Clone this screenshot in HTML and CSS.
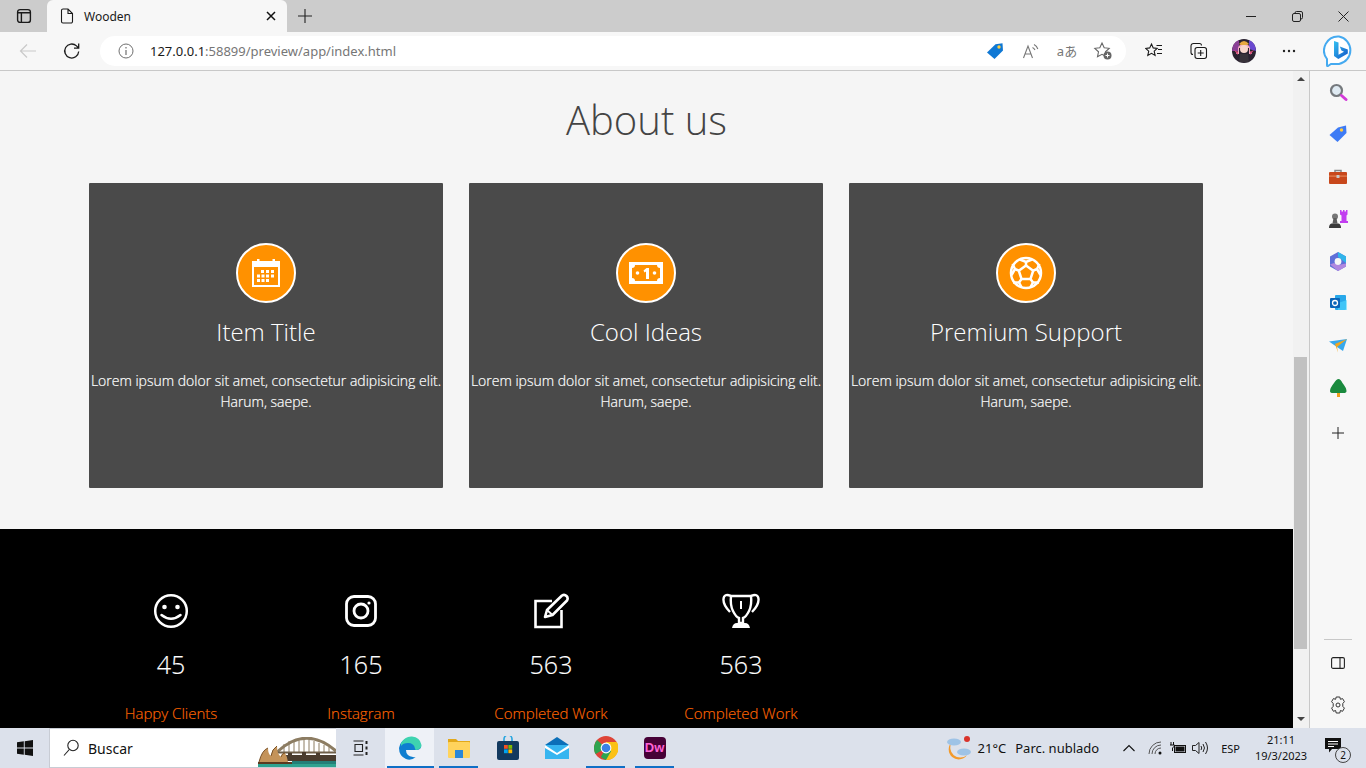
FILE: index.html
```html
<!DOCTYPE html>
<html lang="es">
<head>
<meta charset="utf-8">
<title>Wooden</title>
<link rel="stylesheet" href="styles.css">
</head>
<body>
<div class="window">
  <header class="tabbar">
    <div class="tab-actions">
      <svg width="16" height="16" viewBox="0 0 16 16" fill="none" stroke="#1a1a1a" stroke-width="1.400"><rect x="1.600" y="1.600" width="12.800" height="12.800" rx="2.500"/><path d="M1.600 4.800h12.800M5.400 4.800v9.600" /></svg>
    </div>
    <div class="tab">
      <svg width="14" height="16" viewBox="0 0 14 16" fill="none" stroke="#1a1a1a" stroke-width="1.100"><path d="M1.500 2.500a1.500 1.500 0 0 1 1.500-1.500h5l4.500 4.500V13.500a1.500 1.500 0 0 1-1.500 1.500H3a1.500 1.500 0 0 1-1.500-1.500zM8 1v4.500h4.500"/></svg>
      <span class="tab-title">Wooden</span>
      <svg class="tab-close" width="10" height="10" viewBox="0 0 10 10" stroke="#111" stroke-width="1.500"><path d="M1 1l8 8M9 1l-8 8"/></svg>
    </div>
    <div class="new-tab">
      <svg width="16" height="16" viewBox="0 0 16 16" stroke="#222" stroke-width="1.100"><path d="M8 1v14M1 8h14"/></svg>
    </div>
    <div class="win-controls">
      <div class="win-btn"><svg width="10" height="10" viewBox="0 0 10 10" stroke="#222"><path d="M0 5.500h10"/></svg></div>
      <div class="win-btn"><svg width="11" height="11" viewBox="0 0 11 11" fill="none" stroke="#222"><rect x=".5" y="2.500" width="8" height="8" rx="1.500"/><path d="M3 2.500V2A1.500 1.500 0 0 1 4.500.5H9A1.500 1.500 0 0 1 10.500 2v4.500A1.500 1.500 0 0 1 9 8h-.5"/></svg></div>
      <div class="win-btn"><svg width="11" height="11" viewBox="0 0 11 11" stroke="#222"><path d="M.5.5l10 10M10.500.5l-10 10"/></svg></div>
    </div>
  </header>

  <nav class="toolbar">
    <div class="tool-btn">
      <svg width="18" height="16" viewBox="0 0 18 16" fill="none" stroke="#c9c9c9" stroke-width="1.200"><path d="M17 8H1.500M8 1.500L1.500 8 8 14.500"/></svg>
    </div>
    <div class="tool-btn">
      <svg width="18" height="18" viewBox="0 0 18 18" fill="none" stroke="#1c1c1c" stroke-width="1.300"><path d="M15.700 9.500a7 7 0 1 1-2.200-5.600L15.500 6M15.700 1.500V6.200H11"/></svg>
    </div>
    <div class="address">
      <svg width="16" height="16" viewBox="0 0 16 16" fill="none" stroke="#707070"><circle cx="8" cy="8" r="7"/><path d="M8 7v5M8 4v1.500" stroke-width="1.200"/></svg>
      <div class="url"><span class="url-host">127.0.0.1</span>:58899/preview/app/index.html</div>
      <div class="addr-icons">
        <div class="addr-btn"><svg width="18" height="18" viewBox="0 0 18 18"><path d="M1 10.500L9.500 2.200 16.500 1.200 17 8.500 8.500 17z" fill="#0f78d4"/><circle cx="13" cy="5" r="1.700" fill="#ffcf3f"/></svg></div>
        <div class="addr-btn"><svg width="18" height="18" viewBox="0 0 18 18" fill="none" stroke="#777" stroke-width="1.100"><path d="M1.500 16L6 4 10.500 16M3 12h6M10.500 5.500a5 5 0 0 1 2.500 2.500M12 2.500a7 7 0 0 1 3.800 4.500"/></svg></div>
        <div class="addr-text">aあ</div>
        <div class="addr-btn"><svg width="20" height="20" viewBox="0 0 20 20"><path d="M9 2l2.200 4.700 5 .6-3.700 3.500 1 5-4.500-2.500L4.500 15.800l1-5L1.800 7.300l5-.6z" fill="none" stroke="#666" stroke-width="1.100"/><circle cx="14.500" cy="14.500" r="4" fill="#666"/><path d="M14.500 12.500v4M12.500 14.500h4" stroke="#fff"/></svg></div>
      </div>
    </div>
    <div class="tool-icons">
      <div class="tool-btn-s"><svg width="18" height="18" viewBox="0 0 18 18" fill="none" stroke="#1a1a1a" stroke-width="1.100"><path d="M6.500 2l1.700 3.900 4 .5-3 2.800.9 4.200-3.600-2.100-3.700 2.100.9-4.200-3-2.800 4-.5zM11.500 3.500H17M13 7.500h4M12 11.500h5"/></svg></div>
      <div class="tool-btn-s"><svg width="18" height="18" viewBox="0 0 18 18" fill="none" stroke="#1a1a1a" stroke-width="1.100"><path d="M3 12.500A2 2 0 0 1 1 10.500V4A2.500 2.500 0 0 1 3.500 1.500H9.500A2 2 0 0 1 11.500 3.500"/><rect x="5" y="5.500" width="11.500" height="11" rx="2.200"/><path d="M10.700 8v6M7.700 11h6"/></svg></div>
      <div class="tool-btn-s">
        <svg width="24" height="24" viewBox="0 0 24 24"><circle cx="12" cy="12" r="12" fill="#2a2230"/><path d="M0 12A12 12 0 0 1 7 1L7 12z" fill="#8a3f95"/><path d="M24 12A12 12 0 0 0 17 1L17 10z" fill="#6a48d0"/><path d="M6 12q-1-7 6-7t6 7l2 3h-3V9H7v6H4z" fill="#f3a8c0"/><circle cx="12" cy="10" r="4" fill="#f8d6cc"/><path d="M7 5q5-6 10 0l-2 1H9z" fill="#e8a840"/><path d="M2 11l4 2v3zM22 11l-4 2v3z" fill="#e14d7a"/><path d="M8 15h8l1 8H7z" fill="#38323a"/></svg>
      </div>
      <div class="tool-btn-s"><svg width="14" height="4" viewBox="0 0 14 4" fill="#222"><circle cx="2" cy="2" r="1.200"/><circle cx="7" cy="2" r="1.200"/><circle cx="12" cy="2" r="1.200"/></svg></div>
    </div>
    <div class="bing">
      <svg width="32" height="32" viewBox="0 0 32 32"><defs><linearGradient id="bingb" x1="0" y1="0" x2="1" y2="1"><stop offset="0" stop-color="#35c1f1"/><stop offset="1" stop-color="#1156c8"/></linearGradient></defs><path d="M16 1.500a14 14 0 0 1 0 27.500H8l-3 2q-1 .5-1-1V24A14 14 0 0 1 16 1.500z" fill="#fff" stroke="#45aaf0" stroke-width="2"/><path d="M11 6l4.500 1.600v12.200l5.500-3-2.600-1.200-1.600-4 8 2.800v4l-9.500 5.500L11 21z" fill="url(#bingb)"/></svg>
    </div>
  </nav>

  <div class="body-row">
    <main class="page">
      <section class="about">
        <h1 class="about-title">About us</h1>
        <div class="cards">
          <article class="card">
            <div class="card-icon">
              <svg width="28" height="28" viewBox="0 0 28 28" fill="#fff"><path fill-rule="evenodd" d="M0 2h5V0h2.500v2h13V0H23v2h5v26H0zM2 8v18h24V8z"/><path d="M9 11h3v3H9zM14 11h3v3h-3zM19 11h3v3h-3zM5 15.500h3v3H5zM9.500 15.500h3v3h-3zM14 15.500h3v3h-3zM19 15.500h3v3h-3zM5 20h3v3H5zM9.500 20h3v3h-3zM14 20h3v3h-3z"/></svg>
            </div>
            <h2 class="card-title">Item Title</h2>
            <p class="card-text">Lorem ipsum dolor sit amet, consectetur adipisicing elit. Harum, saepe.</p>
          </article>
          <article class="card">
            <div class="card-icon">
              <svg width="34" height="22" viewBox="0 0 34 22"><path fill="#fff" fill-rule="evenodd" d="M0 0h34v22H0zM6 3a3 3 0 0 1-3 3v10a3 3 0 0 1 3 3h22a3 3 0 0 1 3-3V6a3 3 0 0 1-3-3z"/><circle cx="8.500" cy="11" r="1.800" fill="#fff"/><circle cx="25.500" cy="11" r="1.800" fill="#fff"/><path d="M14.500 8.500l3-2.500h2.500v11h-3V9.500l-1.500 1z" fill="#fff"/></svg>
            </div>
            <h2 class="card-title">Cool Ideas</h2>
            <p class="card-text">Lorem ipsum dolor sit amet, consectetur adipisicing elit. Harum, saepe.</p>
          </article>
          <article class="card">
            <div class="card-icon">
              <svg width="34" height="34" viewBox="0 0 34 34" fill="none" stroke="#fff" stroke-width="2.500"><circle cx="17" cy="17" r="15"/><path d="M17 9.500l7.200 5.200-2.700 8.300h-9l-2.700-8.300z"/><path d="M17 9.500V6M24.200 14.700L28 13M21.500 23l2.500 3.500M12.500 23L10 26.500M9.800 14.700L6 13"/><path d="M11 3.500l6 2.500 6-2.500M28 13l2.500-5M28 13l3.500 6M24 26.500h6M24 26.500l-2.500 4.500M10 26.500H4M10 26.500l2.500 4.500M6 13L3.500 8M6 13l-3.500 6"/></svg>
            </div>
            <h2 class="card-title">Premium Support</h2>
            <p class="card-text">Lorem ipsum dolor sit amet, consectetur adipisicing elit. Harum, saepe.</p>
          </article>
        </div>
      </section>
      <section class="stats">
        <div class="stat">
          <svg width="36" height="36" viewBox="0 0 36 36" fill="none" stroke="#fff" stroke-width="2.500"><circle cx="18" cy="18" r="15.800"/><circle cx="11.500" cy="14" r="2.300" fill="#fff" stroke="none"/><circle cx="24.500" cy="14" r="2.300" fill="#fff" stroke="none"/><path d="M8.500 22q9.500 7.500 19 0" stroke-linecap="round"/></svg>
          <div class="stat-num">45</div>
          <div class="stat-label">Happy Clients</div>
        </div>
        <div class="stat">
          <svg width="36" height="36" viewBox="0 0 36 36" fill="none" stroke="#fff" stroke-width="2.800"><rect x="3.500" y="3.500" width="29" height="29" rx="7.500"/><circle cx="18" cy="18" r="7"/><circle cx="26" cy="10" r="1.600" fill="#fff" stroke="none"/></svg>
          <div class="stat-num">165</div>
          <div class="stat-label">Instagram</div>
        </div>
        <div class="stat">
          <svg width="36" height="36" viewBox="0 0 36 36" fill="none" stroke="#fff" stroke-width="2.600"><path d="M19 8H2.500v26h26V17"/><path d="M12 24l2-7L29 2.500q2.500-1.500 4.500.5t.5 4.500L19.500 22z" stroke-linejoin="round"/><path d="M14 17l5.500 5" stroke-width="1.800"/></svg>
          <div class="stat-num">563</div>
          <div class="stat-label">Completed Work</div>
        </div>
        <div class="stat">
          <svg width="38" height="36" viewBox="0 0 38 36" fill="none" stroke="#fff" stroke-width="2.400"><path d="M9 3h20q1 9-2 15-3 6-6 7v5h-4v-5q-3-1-6-7-3-6-2-15z"/><path d="M9 3Q2 0 1.500 6 1 12 8 19M29 3q7-3 7.500 3 .5 6-6.500 13"/><path d="M10 35q1-5 5-5h8q4 0 5 5z" fill="#fff" stroke="none"/><path d="M19 8v8" stroke-width="2"/></svg>
          <div class="stat-num">563</div>
          <div class="stat-label">Completed Work</div>
        </div>
      </section>
    </main>

    <div class="scrollbar">
      <div class="arrow-up"></div>
      <div class="thumb"></div>
      <div class="arrow-down"></div>
    </div>

    <aside class="sidebar">
      <div class="side-btn"><svg width="19" height="19" viewBox="0 0 19 19"><circle cx="7.500" cy="7.500" r="5.500" fill="#dfeaf2" stroke="#75797d" stroke-width="2.200"/><path d="M12.500 12.500l4.500 4" stroke="#d23ad8" stroke-width="3" stroke-linecap="round"/></svg></div>
      <div class="side-btn"><svg width="18" height="18" viewBox="0 0 18 18"><path d="M.5 10L9 2.500 17 .5 17.500 8 8.500 17z" fill="#3e7bf5"/><circle cx="12.500" cy="5" r="1.700" fill="#ffc93c"/></svg></div>
      <div class="side-btn"><svg width="18" height="16" viewBox="0 0 18 16"><path d="M6 3V1.500h6V3" fill="none" stroke="#888" stroke-width="1.500"/><rect y="3" width="18" height="12" rx="1" fill="#c8481c"/><rect y="6.500" width="18" height="1.200" fill="#e68454"/><rect x="7.500" y="6" width="3" height="3" rx=".5" fill="#c9c9c9"/></svg></div>
      <div class="side-btn"><svg width="19" height="19" viewBox="0 0 19 19"><path d="M11 1h1.500v1.500h1.500V1h1.500v1.500H17V1h1.500v4.500l-1 1V12H19v2h-8v-2h1.500V6.500l-1.500-1z" fill="#c23ef0"/><circle cx="6" cy="7.500" r="3" fill="#777"/><path d="M4.500 9h3l1 5.500h-5z" fill="#5c5c5c"/><path d="M0 19q0-4 2.500-4.500h7Q12 15 12 19z" fill="#3a3a3a"/></svg></div>
      <div class="side-btn"><svg width="18" height="19" viewBox="0 0 18 19"><path d="M9 0l8 4.500v10L9 19l-8-4.500v-10z" fill="#5f6fd8"/><path d="M9 0l8 4.500V11l-4-3-4-3z" fill="#30b4ea"/><path d="M1 12.500l4-1.500 4 2 8-1.500v3L9 19z" fill="#b088e0"/><circle cx="9" cy="9.500" r="3.400" fill="#f7f7f7"/></svg></div>
      <div class="side-btn"><svg width="17" height="16" viewBox="0 0 17 16"><rect x="5" y="0" width="11" height="15" rx="1" fill="#28a8ea"/><path d="M8 8l9-3v10H8z" fill="#50d9ff" opacity=".6"/><rect y="3" width="10" height="10" rx="1" fill="#0a64b8"/><circle cx="5" cy="8" r="2.500" fill="none" stroke="#fff" stroke-width="1.300"/></svg></div>
      <div class="side-btn"><svg width="18" height="14" viewBox="0 0 18 14"><path d="M0 2.500L18 0 14 12 8 8z" fill="#38a8ec"/><path d="M6 5l12-5-10 8 1 5.500z" fill="#f4a71d"/></svg></div>
      <div class="side-btn"><svg width="17" height="18" viewBox="0 0 17 18"><path d="M8.500 0q2 0 4 4 4 5 4 8 0 2-3 2H3q-3 0-3-2 0-3 4-8 2.500-4 4.500-4z" fill="#1a8a3e"/><path d="M7 14h3v4H7z" fill="#eda01f"/></svg></div>
      <div class="side-btn side-plus"><svg width="12" height="12" viewBox="0 0 12 12" stroke="#222"><path d="M6 0v12M0 6h12"/></svg></div>
      <div class="side-bottom">
        <div class="side-rule"></div>
        <div class="side-btn"><svg width="14" height="12" viewBox="0 0 14 12" fill="none" stroke="#222" stroke-width="1.100"><rect x=".6" y=".6" width="12.800" height="10.800" rx="1.500"/><path d="M9 .6v10.800"/></svg></div>
        <div class="side-btn"><svg width="16" height="18" viewBox="0 0 16 18" fill="none" stroke="#333" stroke-width="1"><path d="M6.200 1h3.600l.6 2.300 2.200-.7 1.800 3.100-1.600 1.800v2.900l1.600 1.700-1.800 3.200-2.200-.8L9.800 17H6.200l-.6-2.500-2.200.8-1.800-3.200L3.200 10.400V7.500L1.600 5.700l1.800-3.100 2.200.7z"/><circle cx="8" cy="9" r="2"/></svg></div>
      </div>
    </aside>
  </div>

  <footer class="taskbar">
    <div class="start">
      <svg width="16" height="16" viewBox="0 0 16 16" fill="#111"><path d="M0 2.300L6.800 1.300V7.500H0zM7.700 1.200L16 0V7.500H7.700zM0 8.500H6.800V14.700L0 13.700zM7.700 8.500H16V16L7.700 14.800z"/></svg>
    </div>
    <div class="search">
      <svg width="16" height="18" viewBox="0 0 16 18" fill="none" stroke="#222" stroke-width="1.100"><circle cx="10" cy="6.500" r="5.200"/><path d="M6.300 10.500L1 16.500"/></svg>
      <span class="search-text">Buscar</span>
      <svg class="search-art" width="78" height="30" viewBox="0 0 78 30"><path d="M19 15Q48-12 78 14" fill="none" stroke="#8c7c62" stroke-width="3"/><path d="M26 15V7M31 15V4M36 15V3M41 15V2M46 15V2M51 15V3M56 15V4M61 15V6M66 15V8M71 15V10" stroke="#8c7c62"/><path d="M19 15.500h59" stroke="#6e5f4a" stroke-width="2"/><path d="M26 24v-6h4v-2h4v2h10v-3h4v3h10v-2h4v2h16v6z" fill="#4a3c2f"/><path d="M1 25q3-12 9-14 0 6 3 8 1-7 6-10 0 8 4 11 1-4 4-4 2 3 3 9z" fill="#c4935a"/><path d="M1 25q3-12 9-14M13 19q1-7 6-10M23 20q1-4 4-4" fill="none" stroke="#7a5228"/><path d="M0 25h34v2H0z" fill="#5b3a20"/><path d="M0 27h78v3H0z" fill="#2fa390"/><path d="M34 24h44v3H34z" fill="#247f78"/></svg>
    </div>
    <div class="task-view">
      <svg width="16" height="16" viewBox="0 0 16 16" fill="none" stroke="#222" stroke-width="1.100"><path d="M.5 1h10M.5 15h10M2 4.500h7.500v7H2z"/><path d="M13.500 1v3M13.500 6.500v3M13.500 12v3" stroke-width="2"/></svg>
    </div>
    <div class="task-apps">
      <div class="task-app task-app-active"><svg width="24" height="24" viewBox="0 0 24 24"><path d="M1 12A11.500 11.500 0 0 1 23 9q1 5-5 5H8q0 6 7 7 2 .5 3 0-5 4-10 2Q1 20 1 12z" fill="#0f7ed0"/><path d="M3 7Q7 0 14 .5 22 1 23.500 9q0 4-5 5-1.500 0-1.500-1.500Q16 7 10 7 5 7 3 10z" fill="#3ed3b0"/></svg></div>
      <div class="task-app task-app-open"><svg width="22" height="20" viewBox="0 0 22 20"><path d="M0 1h8l2 2h12v3H0z" fill="#e2a81a"/><rect y="4" width="22" height="16" rx="1" fill="#ffd35c"/><rect x="7" y="12" width="8" height="8" fill="#2b87d8"/></svg></div>
      <div class="task-app"><svg width="22" height="24" viewBox="0 0 22 24"><path d="M7 5V3a4 4 0 0 1 8 0v2" fill="none" stroke="#29a6e0" stroke-width="1.600"/><rect y="5" width="22" height="19" rx="2" fill="#12395f"/><rect x="7" y="9" width="3.800" height="3.800" fill="#f25022"/><rect x="11.400" y="9" width="3.800" height="3.800" fill="#7fba00"/><rect x="7" y="13.400" width="3.800" height="3.800" fill="#00a4ef"/><rect x="11.400" y="13.400" width="3.800" height="3.800" fill="#ffb900"/></svg></div>
      <div class="task-app"><svg width="24" height="22" viewBox="0 0 24 22"><path d="M0 8L12 0l12 8z" fill="#0b6fb8"/><rect y="8" width="24" height="14" fill="#36b5f0"/><path d="M0 8l12 8 12-8v3L12 18 0 11z" fill="#fff"/></svg></div>
      <div class="task-app task-app-open"><svg width="24" height="24" viewBox="0 0 24 24"><circle cx="12" cy="12" r="12" fill="#de4437"/><path d="M12 12L1.600 18A12 12 0 0 1 3 4z" fill="#2ea44f"/><path d="M12 6h10.800A12 12 0 0 1 12 24z" fill="#fbc116"/><path d="M12 12l-5.200 9A12 12 0 0 0 12 24l5.200-9z" fill="#2ea44f"/><circle cx="12" cy="12" r="5.400" fill="#fff"/><circle cx="12" cy="12" r="4.300" fill="#3b82e6"/></svg></div>
      <div class="task-app task-app-open"><div class="dw-logo">Dw</div></div>
    </div>
    <div class="tray">
      <svg class="weather" width="26" height="26" viewBox="0 0 26 26"><path d="M6 7a10 10 0 1 0 15 13A10 10 0 0 1 6 7z" fill="#f39a2b"/><circle cx="21" cy="4" r="3" fill="#d9332b"/><ellipse cx="8" cy="7" rx="7" ry="3.500" fill="#9ec3e6"/><ellipse cx="18" cy="17" rx="7" ry="3.500" fill="#9ec3e6"/></svg>
      <span class="temp">21°C</span>
      <span class="weather-text">Parc. nublado</span>
      <svg class="tray-chevron" width="12" height="8" viewBox="0 0 12 8" fill="none" stroke="#111" stroke-width="1.100"><path d="M.5 7L6 1.500 11.500 7"/></svg>
      <svg class="tray-wifi" width="14" height="14" viewBox="0 0 14 14" fill="none" stroke="#222"><path d="M1 13a12 12 0 0 1 12-12M4 13a9 9 0 0 1 9-9M7 13a6 6 0 0 1 6-6" stroke="#555"/><circle cx="12" cy="12" r="1.500" fill="#111" stroke="none"/></svg>
      <svg class="tray-batt" width="16" height="12" viewBox="0 0 16 12" fill="none" stroke="#111"><rect x="4.500" y="3.500" width="11" height="7"/><rect x="6" y="5" width="8" height="4" fill="#111"/><path d="M1 0v3M3.500 0v3M0 3h4.500v1L2.500 6v3" /></svg>
      <svg class="tray-vol" width="16" height="14" viewBox="0 0 16 14" fill="none" stroke="#222"><path d="M.5 4.500h3L7 1.500v11L3.500 9.500h-3zM9 5q1.500 2 0 4M11 3q3 4 0 8M13.500 1q4 6 0 12"/></svg>
      <span class="lang">ESP</span>
      <div class="clock"><span>21:11</span><span>19/3/2023</span></div>
      <div class="notif">
        <svg width="16" height="15" viewBox="0 0 16 15"><path d="M0 0h16v11H7l-3 3.500V11H0z" fill="#111"/><path d="M3 3.500h10M3 6h10M3 8.500h6" stroke="#fff"/></svg>
        <span class="notif-badge">2</span>
      </div>
    </div>
  </footer>
</div>
</body>
</html>
```
FILE: styles.css
```css
* { box-sizing: border-box; }
html, body { margin: 0; padding: 0; height: 100%; overflow: hidden; }
body { font-family: "Noto Sans", "Open Sans", sans-serif; color: #222; }
svg { display: block; flex: none; }

.window { width: 1366px; height: 768px; display: flex; flex-direction: column; overflow: hidden; background: #f7f7f7; }

/* Tab strip */
.tabbar { height: 32px; flex: none; background: #cccccc; display: flex; align-items: flex-end; }
.tab-actions { width: 47px; height: 32px; display: flex; align-items: center; justify-content: center; }
.tab { width: 240px; height: 32px; background: #f7f7f7; border-radius: 6px 6px 0 0; display: flex; align-items: center; padding: 0 11px 0 13px; }
.tab-title { font-size: 12px; margin-left: 10px; color: #1a1a1a; }
.tab-close { margin-left: auto; }
.new-tab { width: 36px; height: 32px; display: flex; align-items: center; justify-content: center; }
.win-controls { margin-left: auto; display: flex; height: 32px; }
.win-btn { width: 46px; display: flex; align-items: center; justify-content: center; }

/* Toolbar */
.toolbar { height: 39px; flex: none; background: #f7f7f7; border-bottom: 1px solid #c8c8c8; display: flex; align-items: center; padding: 0 4px 1px 6px; }
.tool-btn { width: 44px; height: 30px; display: flex; align-items: center; justify-content: center; }
.address { width: 1026px; height: 30px; margin-left: 6px; background: #fff; border-radius: 15px; display: flex; align-items: center; padding: 0 5px 0 18px; }
.url { font-size: 13px; color: #767676; margin-left: 16px; white-space: nowrap; }
.url-host { color: #1a1a1a; }
.addr-icons { margin-left: auto; display: flex; align-items: center; }
.addr-btn { width: 36px; height: 30px; display: flex; align-items: center; justify-content: center; }
.addr-text { width: 36px; font-size: 13px; color: #777; text-align: center; font-family: "Noto Sans", "Noto Sans CJK JP", sans-serif; }
.tool-icons { display: flex; margin-left: 5px; }
.tool-btn-s { width: 45px; height: 30px; display: flex; align-items: center; justify-content: center; }
.bing { margin-left: 5px; width: 46px; display: flex; justify-content: center; }

/* Main row */
.body-row { flex: 1; min-height: 0; display: flex; }
.page { width: 1293px; flex: none; overflow: hidden; font-family: "Open Sans", sans-serif; }

.about { height: 458px; background: #f5f5f5; padding-top: 22px; }
.about-title { margin: 0; height: 54px; line-height: 54px; font-size: 40px; font-weight: 300; color: #444; text-align: center; }
.cards { margin-top: 36px; padding-left: 89px; display: flex; gap: 26px; }
.card { width: 354px; height: 305px; background: #4a4a4a; border-radius: 1px; padding-top: 60px; display: flex; flex-direction: column; align-items: center; color: #fff; }
.card-icon { width: 60px; height: 60px; border-radius: 50%; border: 2px solid #fff; background: #ff9100; display: flex; align-items: center; justify-content: center; }
.card-title { margin: 12px 0 0; font-size: 24px; line-height: 33px; font-weight: 300; }
.card-text { margin: 22px 0 0; font-size: 14px; line-height: 21px; font-weight: 300; text-align: center; -webkit-text-stroke: .2px #fff; }

.stats { height: 199px; background: #000; padding: 64px 0 0 76px; display: flex; }
.stat { width: 190px; display: flex; flex-direction: column; align-items: center; color: #fff; }
.stat-num { margin-top: 19px; font-size: 25px; line-height: 33px; font-weight: 300; -webkit-text-stroke: .15px #fff; }
.stat-label { margin-top: 22px; font-size: 15px; line-height: 20px; font-weight: 300; color: #ff6600; -webkit-text-stroke: .15px #ff6600; }

/* Scrollbar */
.scrollbar { width: 16px; flex: none; background: #f1f1f1; display: flex; flex-direction: column; align-items: center; padding: 0 1px 0 0; }
.arrow-up { width: 0; height: 0; margin-top: 6px; border: 4px solid transparent; border-top: 0; border-bottom: 4px solid #444; }
.thumb { width: 13px; height: 292px; margin-top: 276px; background: #c1c1c1; }
.arrow-down { width: 0; height: 0; margin-top: 68px; border: 4px solid transparent; border-bottom: 0; border-top: 4px solid #444; }

/* Sidebar */
.sidebar { width: 57px; flex: none; border-left: 1px solid #c8c8c8; background: #f7f7f7; display: flex; flex-direction: column; }
.side-btn { height: 42.25px; flex: none; display: flex; align-items: center; justify-content: center; }
.side-plus { margin-top: 3px; }
.side-bottom { margin-top: auto; padding-bottom: 2px; }
.side-rule { height: 1px; margin: 0 14px 2px; background: #c8c8c8; width: 28px; }

/* Taskbar */
.taskbar { height: 40px; flex: none; background: #dce1eb; display: flex; align-items: stretch; position: relative; font-size: 13px; color: #111; }
.start { width: 49px; display: flex; align-items: center; justify-content: center; }
.search { width: 287px; background: #fff; display: flex; align-items: center; padding-left: 13px; border: 1px solid #c8ccd4; border-width: 1px 0 1px 1px; }
.search-text { margin-left: 9px; font-size: 14px; }
.search-art { margin-left: auto; align-self: flex-end; }
.task-view { width: 49px; display: flex; align-items: center; justify-content: center; }
.task-apps { display: flex; }
.task-app { width: 49px; display: flex; align-items: center; justify-content: center; position: relative; }
.task-app-active { background: #eef1f7; }
.task-app-active::after, .task-app-open::after { content: ""; position: absolute; left: 5px; right: 5px; bottom: 0; height: 2px; background: #0f6fc6; }
.task-app-active::after { left: 2px; right: 0; }
.dw-logo { width: 22px; height: 22px; border-radius: 4px; background: #470137; color: #ff61d5; font-size: 13px; font-weight: 700; line-height: 22px; text-align: center; font-family: "Liberation Sans", sans-serif; }
.tray { margin-left: auto; display: flex; align-items: center; padding-right: 15px; }
.weather { margin-right: 6px; }
.temp { font-size: 13px; }
.weather-text { margin-left: 9px; font-size: 13px; }
.tray-chevron { margin-left: 24px; }
.tray-wifi { margin-left: 13px; }
.tray-batt { margin-left: 8px; }
.tray-vol { margin-left: 6px; }
.lang { margin-left: 13px; font-size: 11px; }
.clock { margin-left: 11px; width: 60px; display: flex; flex-direction: column; align-items: center; font-size: 11px; line-height: 16px; }
.notif { margin-left: 14px; width: 26px; height: 30px; position: relative; padding-top: 5px; }
.notif-badge { position: absolute; right: 0; bottom: 0; width: 16px; height: 16px; border-radius: 50%; border: 1px solid #444; background: #dce1eb; font-size: 10px; line-height: 14px; text-align: center; }
```
